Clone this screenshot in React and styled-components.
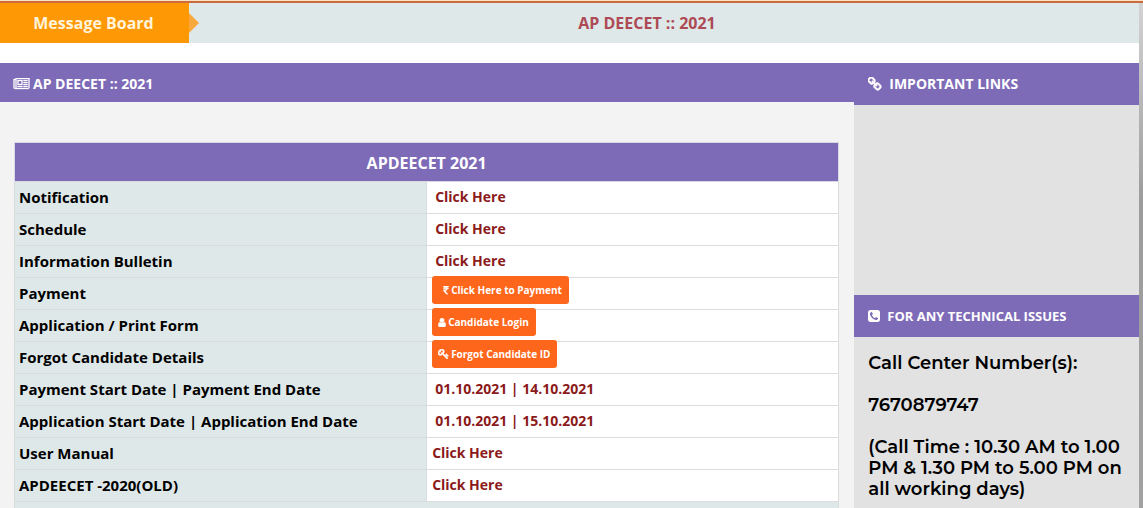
import React from "react";
import styled, { createGlobalStyle } from "styled-components";

const purple = "#7e6bb8";
const mist = "#dfe8e8";
const orange = "#fe661b";

const GlobalStyle = createGlobalStyle`
  *, *::before, *::after { box-sizing: border-box; }
  body {
    margin: 0;
    overflow: hidden;
    font-family: "Open Sans", "Liberation Sans", sans-serif;
    background: linear-gradient(#d4d4d4, #9c9c9c 200px, #a2a2a2);
  }
`;

const Page = styled.div`
  min-height: 100vh;
  border-top: 1px solid #fbe3c4;
`;

const TopRule = styled.div`
  height: 2px;
  background: #cb6c40;
`;

const Sheet = styled.div`
  margin-right: 4px;
  background: #fff;
`;

const MessageBar = styled.div`
  display: flex;
  height: 40px;
  margin-bottom: 20px;
  background: ${mist};
  font-size: 16px;
  font-weight: 700;
  line-height: 40px;
`;

const BoardLabel = styled.div`
  position: relative;
  width: 189px;
  padding-right: 2px;
  background: #ff9805;
  color: #fff3da;
  text-align: center;

  &::after {
    content: "";
    position: absolute;
    left: 100%;
    top: 10px;
    border: 10px solid transparent;
    border-left-color: #f9a83c;
    border-right-width: 0;
  }
`;

const BoardMessage = styled.div`
  flex: 1;
  padding-right: 34px;
  color: #ad4a55;
  text-align: center;
`;

const Columns = styled.div`
  display: flex;
`;

const Main = styled.main`
  flex: 3 1 0;
  min-width: 0;
  background: #f3f3f3;
`;

const Side = styled.aside`
  flex: 1 1 0;
  min-width: 0;
  background: #e2e2e2;
`;

const PanelHeading = styled.h2`
  display: flex;
  align-items: center;
  gap: ${(p) => (p.$side ? 7 : 3)}px;
  height: ${(p) => (p.$side ? 42 : 39)}px;
  margin: 0;
  padding: ${(p) => (p.$side ? "0 14px 1px" : "2px 13px 0")};
  background: ${purple};
  color: #fff;
  font-size: ${(p) => (p.$small ? 13 : 14)}px;
  font-weight: 700;
  white-space: nowrap;
`;

const Icon = styled.svg`
  flex: none;
  width: ${(p) => p.$w}px;
  height: ${(p) => p.$h}px;
  fill: currentColor;
  stroke: currentColor;
  stroke-width: ${(p) => p.$bold || 0};
`;

const TableWrap = styled.div`
  padding: 40px 15px 0 14px;
`;

const Table = styled.table`
  width: 100%;
  table-layout: fixed;
  border-collapse: collapse;
`;

const TitleCell = styled.th`
  height: 39px;
  padding: 2px 0 0;
  border: 1px solid #d9d9e4;
  background: ${purple};
  color: #fff;
  font-size: 16px;
  font-weight: 700;
`;

const LabelCell = styled.th`
  height: 32px;
  padding: 0 4px 2px;
  border: 1px solid #d8dcdc;
  background: ${mist};
  color: #000;
  font-size: 15px;
  font-weight: 700;
  line-height: 20px;
  text-align: left;
`;

const ValueCell = styled.td`
  height: 32px;
  padding: 0 ${(p) => (p.$inset ? 8 : 5)}px ${(p) => (p.$top ? 0 : 2)}px;
  border: 1px solid #dcdcdc;
  background: #fff;
  color: #8b1a1a;
  font-size: 14px;
  font-weight: 700;
  line-height: 20px;
  vertical-align: ${(p) => (p.$top ? "top" : "middle")};
`;

const FooterCell = styled.td`
  height: 32px;
  border: 1px solid #d8dcdc;
  background: ${mist};
`;

const TextLink = styled.a`
  color: inherit;
  text-decoration: none;
`;

/* Positioned so that it paints over the row's top border. */
const ActionButton = styled.button`
  position: relative;
  display: flex;
  align-items: center;
  gap: 2px;
  height: 28px;
  margin: -2px 0 0;
  padding: 0 7px 0 ${(p) => (p.$indent ? 11 : 6)}px;
  border: 0;
  border-radius: 3px;
  background: ${orange};
  color: #fff;
  font-family: inherit;
  font-size: 10px;
  font-weight: 700;
  line-height: 14px;
  cursor: pointer;
`;

const LinksArea = styled.div`
  height: 190px;
`;

const Contact = styled.div`
  display: grid;
  gap: 21px;
  padding: 16px 10px 8px 14px;
  color: #000;
  font-family: Montserrat, Inter, sans-serif;
  font-size: 18px;
  font-weight: 600;
  line-height: 21px;
`;

const ContactLine = styled.p`
  margin: 0;
`;

const icons = {
  news: {
    box: "0 128 2048 1536",
    bold: 40,
    d: "M1024 512h-384v384h384v-384zm128 640v128h-640v-128h640zm0-768v640h-640v-640h640zm640 768v128h-512v-128h512zm0-256v128h-512v-128h512zm0-256v128h-512v-128h512zm0-256v128h-512v-128h512zm-1536 960v-960h-128v960q0 26 19 45t45 19 45-19 19-45zm1664 0v-1088h-1536v1088q0 33-11 64h1483q26 0 45-19t19-45zm128-1216v1216q0 80-56 136t-136 56h-1664q-80 0-136-56t-56-136v-1088h256v-128h1792z",
  },
  chain: {
    box: "64 64 1664 1664",
    bold: 70,
    d: "M1456 1216q0-40-28-68l-208-208q-28-28-68-28-42 0-72 32 3 3 19 18.5t21.5 21.5 15 19 13 25.5 3.5 27.5q0 40-28 68t-68 28q-15 0-27.5-3.5t-25.5-13-19-15-21.5-21.5-18.5-19q-33 31-33 73 0 40 28 68l206 207q27 27 68 27 40 0 68-26l147-146q28-28 28-67zm-703-705q0-40-28-68l-206-207q-28-28-68-28-39 0-68 27l-147 146q-28 28-28 67 0 40 28 68l208 208q27 27 68 27 42 0 72-31-3-3-19-18.5t-21.5-21.5-15-19-13-25.5-3.5-27.5q0-40 28-68t68-28q15 0 27.5 3.5t25.5 13 19 15 21.5 21.5 18.5 19q33-31 33-73zm895 705q0 120-85 203l-147 146q-83 83-203 83-121 0-204-85l-206-207q-83-83-83-203 0-123 88-209l-88-88q-86 88-208 88-120 0-204-84l-208-208q-84-84-84-204t85-203l147-146q83-83 203-83 121 0 204 85l206 207q83 83 83 203 0 123-88 209l88 88q86-88 208-88 120 0 204 84l208 208q84 84 84 204z",
  },
  phone: {
    box: "128 128 1536 1536",
    d: "M1408 1193q0-11-2-16t-18-16.500-40.500-25-47.500-26.500-45.500-25-28.500-15q-5-3-19-13t-25-15-21-5q-15 0-36.500 20.500t-39.500 45-38.500 45-33.500 20.500q-7 0-16.500-3.500t-15.500-6.500-17-9.500-14-8.500q-99-55-170-126.500t-127-170.500q-2-3-8.500-14t-9.500-17-6.500-15.500-3.500-16.500q0-13 20.500-33.500t45-38.500 45-39.500 20.500-36.500q0-10-5-21t-15-25-13-19q-3-6-15-28.500t-25-45.500-26.500-47.500-25-40.500-16.500-18-16-2q-48 0-101 22-46 21-80 94.500t-34 130.500q0 16 2.500 34t5 30.500 9 33 10 29.500 12.500 33 11 30q60 164 216.500 320.500t320.500 216.500q6 2 30 11t33 12.500 29.500 10 33 9 30.500 5 34 2.500q57 0 130.500-34t94.500-80q22-53 22-101zm256-777v960q0 119-84.500 203.500t-203.500 84.500h-960q-119 0-203.500-84.500t-84.500-203.500v-960q0-119 84.500-203.500t203.500-84.500h960q119 0 203.500 84.500t84.500 203.500z",
  },
  rupee: {
    box: "384 128 1024 1536",
    bold: 60,
    d: "M1345 470v102q0 14-9 23t-23 9h-168q-23 144-129 234t-276 110q167 178 459 536 14 16 4 34-8 18-29 18h-195q-16 0-25-12-306-367-498-571-9-9-9-22v-127q0-13 9.500-22.500t22.500-9.500h112q132 0 212.500-43t102.500-125h-427q-14 0-23-9t-9-23v-102q0-14 9-23t23-9h413q-57-113-268-113h-145q-13 0-22.500-9.500t-9.500-22.500v-133q0-14 9-23t23-9h832q14 0 23 9t9 23v102q0 14-9 23t-23 9h-233q47 61 64 144h171q14 0 23 9t9 23z",
  },
  user: {
    box: "256 128 1280 1536",
    bold: 60,
    d: "M1536 1399q0 109-62.500 187t-150.500 78h-854q-88 0-150.500-78t-62.500-187q0-85 8.500-160.500t31.500-152 58.500-131 94-89 134.500-34.500q131 128 313 128t313-128q76 0 134.500 34.500t94 89 58.500 131 31.500 152 8.500 160.500zm-256-887q0 159-112.500 271.500t-271.500 112.500-271.500-112.500-112.500-271.500 112.500-271.500 271.500-112.500 271.500 112.500 112.500 271.500z",
  },
  key: {
    box: "64 128 1664 1600",
    bold: 90,
    d: "M832 512q0-80-56-136t-136-56-136 56-56 136q0 42 19 83-41-19-83-19-80 0-136 56t-56 136 56 136 136 56 136-56 56-136q0-42-19-83 41 19 83 19 80 0 136-56t56-136zm851 704q0 17-49 66t-66 49q-9 0-28.500-16t-36.500-33-38.500-40-24.500-26l-96 96 220 220q28 28 28 68 0 42-39 81t-81 39q-40 0-68-28l-671-671q-176 131-365 131-163 0-265.500-102.500t-102.500-265.500q0-160 95-313t248-248 313-95q163 0 265.500 102.500t102.500 265.500q0 189-131 365l355 355 96-96q-3-3-26-24.500t-40-38.500-33-36.500-16-28.500q0-17 49-66t66-49q13 0 23 10 6 6 46 44.500t82 79.500 86.500 86 73 78 28.500 41z",
  },
};

function Glyph({ name, w, h }) {
  const icon = icons[name];
  return (
    <Icon viewBox={icon.box} $w={w} $h={h} $bold={icon.bold} aria-hidden="true">
      <path d={icon.d} />
    </Icon>
  );
}

const rows = [
  { label: "Notification", link: "Click Here", inset: true },
  { label: "Schedule", link: "Click Here", inset: true },
  { label: "Information Bulletin", link: "Click Here", inset: true },
  { label: "Payment", button: "Click Here to Payment", icon: "rupee", w: 6, h: 9, indent: true },
  { label: "Application / Print Form", button: "Candidate Login", icon: "user", w: 8, h: 9 },
  { label: "Forgot Candidate Details", button: "Forgot Candidate ID", icon: "key", w: 11, h: 10 },
  { label: "Payment Start Date | Payment End Date", text: "01.10.2021 | 14.10.2021", inset: true },
  { label: "Application Start Date | Application End Date", text: "01.10.2021 | 15.10.2021", inset: true },
  { label: "User Manual", link: "Click Here" },
  { label: "APDEECET -2020(OLD)", link: "Click Here" },
];

function Row({ row }) {
  return (
    <tr>
      <LabelCell scope="row">{row.label}</LabelCell>
      <ValueCell $inset={row.inset} $top={Boolean(row.button)}>
        {row.link && <TextLink href="#">{row.link}</TextLink>}
        {row.text}
        {row.button && (
          <ActionButton type="button" $indent={row.indent}>
            <Glyph name={row.icon} w={row.w} h={row.h} />
            {row.button}
          </ActionButton>
        )}
      </ValueCell>
    </tr>
  );
}

export default function App() {
  return (
    <Page>
      <GlobalStyle />
      <TopRule />
      <Sheet>
        <MessageBar>
          <BoardLabel>Message Board</BoardLabel>
          <BoardMessage>AP DEECET :: 2021</BoardMessage>
        </MessageBar>
        <Columns>
          <Main>
            <PanelHeading>
              <Glyph name="news" w={17} h={12} />
              AP DEECET :: 2021
            </PanelHeading>
            <TableWrap>
              <Table>
                <thead>
                  <tr>
                    <TitleCell colSpan={2}>APDEECET 2021</TitleCell>
                  </tr>
                </thead>
                <tbody>
                  {rows.map((row) => (
                    <Row key={row.label} row={row} />
                  ))}
                  <tr>
                    <FooterCell colSpan={2} />
                  </tr>
                </tbody>
              </Table>
            </TableWrap>
          </Main>
          <Side>
            <PanelHeading $side>
              <Glyph name="chain" w={14} h={14} />
              IMPORTANT LINKS
            </PanelHeading>
            <LinksArea />
            <PanelHeading $side $small>
              <Glyph name="phone" w={12} h={12} />
              FOR ANY TECHNICAL ISSUES
            </PanelHeading>
            <Contact>
              <ContactLine>Call Center Number(s):</ContactLine>
              <ContactLine>7670879747</ContactLine>
              <ContactLine>(Call Time : 10.30 AM to 1.00 PM &amp; 1.30 PM to 5.00 PM on all working days)</ContactLine>
            </Contact>
            <PanelHeading as="div" $side />
          </Side>
        </Columns>
      </Sheet>
    </Page>
  );
}
